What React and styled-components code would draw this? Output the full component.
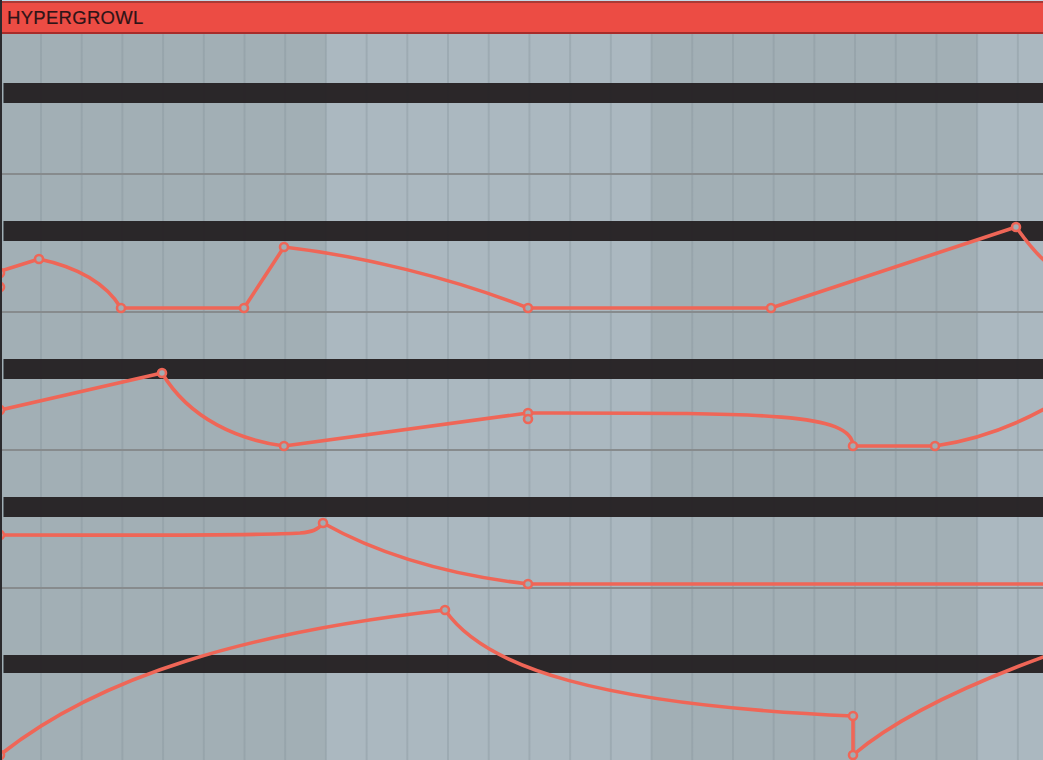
import React from 'react';
import styled, { createGlobalStyle } from 'styled-components';

const GlobalStyle = createGlobalStyle`
  html, body {
    margin: 0;
    padding: 0;
    background: #a3b0b6;
    overflow: hidden;
  }
`;

const Frame = styled.div`
  width: 1043px;
  height: 760px;
  display: flex;
  flex-direction: column;
  box-sizing: border-box;
  border-left: 2px solid #2b2a2d;
  overflow: hidden;
`;

const TopRule = styled.div`
  height: 1px;
  background: #c4dae8;
  flex-shrink: 0;
`;

const ClipHeader = styled.div`
  height: 29px;
  flex-shrink: 0;
  display: flex;
  align-items: center;
  padding-left: 5px;
  background: #ec4c44;
  border-top: 2px solid #a93a36;
  border-bottom: 2px solid #a72c2a;
  font-family: "Liberation Sans", Arial, sans-serif;
  font-size: 18.5px;
  letter-spacing: 0.3px;
  color: #2e1417;
  -webkit-text-stroke: 0.2px #2e1417;
`;

const Arrangement = styled.div`
  position: relative;
  flex: 1;
  display: flex;
  flex-direction: column;
  background-color: #a2afb5;
  background-image:
    linear-gradient(90deg, rgba(128, 142, 150, 0.32) 0 2px, transparent 2px),
    linear-gradient(90deg, #a2afb5 0 325.7px, #abb8c0 325.7px 651.4px);
  background-size: 40.71px 100%, 651.4px 100%;
  background-position: 38px 0, -2px 0;
  background-repeat: repeat-x;
`;

const Lane = styled.div`
  display: flex;
  flex-direction: column;
  flex-shrink: 0;
  padding-top: ${p => p.$gap}px;
`;

const LaneBar = styled.div`
  height: ${p => p.$h || 20}px;
  margin-left: 1px;
  background: rgba(40, 36, 38, 0.98);
  border-left: 1px solid #5f686d;
`;

const LaneBody = styled.div`
  height: 70px;
`;

const Baseline = styled.div`
  height: 2px;
  background: #878b8d;
`;

const Overlay = styled.svg`
  position: absolute;
  left: 0;
  top: 0;
  width: 100%;
  height: 100%;
  overflow: visible;
  pointer-events: none;
`;

const STROKE = '#ef6657';

const paths = [
  // lane 2
  'M-2 272 L39 259 C72 266 104 280 121 308 L244 308 L284 247 C362 256 452 278 528 308 L771 308 L1016 227 C1024 238 1032 250 1046 262',
  // lane 3
  'M0 410 L162 373 C190 420 240 440 284 446 L528 413 C760 413 852 412 853 446 L935 446 C975 440 1010 428 1046 408',
  // lane 4
  'M0 535 C150 535 250 536 300 533 C312 532 318 530 323 523 C380 555 450 575 528 584 L1046 584',
  // lane 5
  'M0 755 C100 675 250 632 445 610 C485 668 600 705 853 716 L853 755 C900 715 980 680 1046 656',
];

const points = [
  [0, 273], [0, 287], [39, 259], [121, 308], [244, 308], [284, 247], [528, 308], [771, 308], [1016, 227],
  [0, 410], [162, 373], [284, 446], [528, 413], [528, 419], [853, 446], [935, 446],
  [0, 535], [323, 523], [528, 584],
  [0, 755], [445, 610], [853, 716], [853, 755],
];

const lanes = [
  { gap: 49, bar: 20, line: true },
  { gap: 46, bar: 20, line: true },
  { gap: 46, bar: 20, line: true },
  { gap: 46, bar: 20, line: true },
  { gap: 66, bar: 18, line: false },
];

export default function App() {
  return (
    <Frame>
      <GlobalStyle />
      <TopRule />
      <ClipHeader>HYPERGROWL</ClipHeader>
      <Arrangement>
        {lanes.map((lane, i) => (
          <Lane key={i} $gap={lane.gap}>
            <LaneBar $h={lane.bar} />
            {lane.line && <LaneBody />}
            {lane.line && <Baseline />}
          </Lane>
        ))}
        <Overlay>
          <g transform="translate(-2,-34)">
            {paths.map((d, i) => (
              <path key={i} d={d} fill="none" stroke={STROKE} strokeWidth="3.6" strokeLinejoin="round" />
            ))}
            {points.map(([x, y], i) => (
              <circle key={i} cx={x} cy={y} r="4" fill="#a1adb3" stroke={STROKE} strokeWidth="2.6" />
            ))}
          </g>
        </Overlay>
      </Arrangement>
    </Frame>
  );
}
